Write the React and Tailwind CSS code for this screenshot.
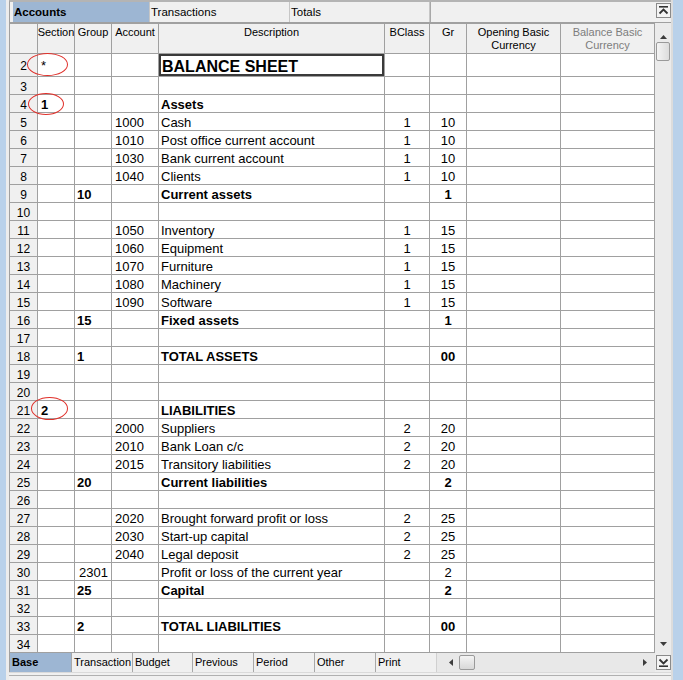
import React from "react";

const rows = [
  { n: 2, sec: "*", desc: "BALANCE SHEET", title: true },
  { n: 3 },
  { n: 4, sec: "1", desc: "Assets", bold: true },
  { n: 5, acc: "1000", desc: "Cash", bc: "1", gr: "10" },
  { n: 6, acc: "1010", desc: "Post office current account", bc: "1", gr: "10" },
  { n: 7, acc: "1030", desc: "Bank current account", bc: "1", gr: "10" },
  { n: 8, acc: "1040", desc: "Clients", bc: "1", gr: "10" },
  { n: 9, grp: "10", desc: "Current assets", gr: "1", bold: true },
  { n: 10 },
  { n: 11, acc: "1050", desc: "Inventory", bc: "1", gr: "15" },
  { n: 12, acc: "1060", desc: "Equipment", bc: "1", gr: "15" },
  { n: 13, acc: "1070", desc: "Furniture", bc: "1", gr: "15" },
  { n: 14, acc: "1080", desc: "Machinery", bc: "1", gr: "15" },
  { n: 15, acc: "1090", desc: "Software", bc: "1", gr: "15" },
  { n: 16, grp: "15", desc: "Fixed assets", gr: "1", bold: true },
  { n: 17 },
  { n: 18, grp: "1", desc: "TOTAL ASSETS", gr: "00", bold: true },
  { n: 19 },
  { n: 20 },
  { n: 21, sec: "2", desc: "LIABILITIES", bold: true },
  { n: 22, acc: "2000", desc: "Suppliers", bc: "2", gr: "20" },
  { n: 23, acc: "2010", desc: "Bank Loan c/c", bc: "2", gr: "20" },
  { n: 24, acc: "2015", desc: "Transitory liabilities", bc: "2", gr: "20" },
  { n: 25, grp: "20", desc: "Current liabilities", gr: "2", bold: true },
  { n: 26 },
  { n: 27, acc: "2020", desc: "Brought forward profit or loss", bc: "2", gr: "25" },
  { n: 28, acc: "2030", desc: "Start-up capital", bc: "2", gr: "25" },
  { n: 29, acc: "2040", desc: "Legal deposit", bc: "2", gr: "25" },
  { n: 30, grp: "2301", grpIndent: true, desc: "Profit or loss of the current year", gr: "2" },
  { n: 31, grp: "25", desc: "Capital", gr: "2", bold: true },
  { n: 32 },
  { n: 33, grp: "2", desc: "TOTAL LIABILITIES", gr: "00", bold: true },
  { n: 34 },
];

const headers = [
  { t: [""], cls: "" },
  { t: ["Section"], cls: "" },
  { t: ["Group"], cls: "" },
  { t: ["Account"], cls: "" },
  { t: ["Description"], cls: "" },
  { t: ["BClass"], cls: "" },
  { t: ["Gr"], cls: "" },
  { t: ["Opening Basic", "Currency"], cls: "" },
  { t: ["Balance Basic", "Currency"], cls: "text-[#7d7d7d]" },
];

function TopButton() {
  return (
    <div className="w-[15px] h-[15px] border border-[#8a8a8a] bg-[#f4f4f4] flex items-center justify-center">
      <svg width="11" height="11" viewBox="0 0 11 11">
        <rect x="1" y="1" width="9" height="1.6" fill="#333" />
        <polyline points="1.5,8.5 5.5,4.5 9.5,8.5" fill="none" stroke="#333" strokeWidth="1.8" />
      </svg>
    </div>
  );
}

function BottomButton() {
  return (
    <div className="w-[15px] h-[15px] border border-[#8a8a8a] bg-[#f4f4f4] flex items-center justify-center">
      <svg width="11" height="11" viewBox="0 0 11 11">
        <polyline points="1.5,2.5 5.5,6.5 9.5,2.5" fill="none" stroke="#333" strokeWidth="1.8" />
        <rect x="1" y="8.4" width="9" height="1.6" fill="#333" />
      </svg>
    </div>
  );
}

function Cell({ children, className = "" }) {
  return (
    <div className={`bg-white flex items-center pt-[2px] overflow-hidden whitespace-nowrap ${className}`}>
      {children}
    </div>
  );
}

export default function App() {
  const topTabs = [
    { t: "Accounts", w: "w-[137px]", active: true },
    { t: "Transactions", w: "w-[140px]" },
    { t: "Totals", w: "w-[140px]" },
  ];
  const bottomTabs = [
    { t: "Base", w: "w-[61px]", active: true },
    { t: "Transaction", w: "w-[61px]" },
    { t: "Budget", w: "w-[60px]" },
    { t: "Previous", w: "w-[61px]" },
    { t: "Period", w: "w-[61px]" },
    { t: "Other", w: "w-[61px]" },
    { t: "Print", w: "w-[61px]" },
  ];

  return (
    <div
      className="relative w-[683px] h-[680px] overflow-hidden bg-[#f0f0f0] flex text-black"
      style={{ fontFamily: '"Liberation Sans", Arial, sans-serif' }}
    >
      {/* left window frame */}
      <div className="w-[9px] h-full flex shrink-0">
        <div className="w-[6px] h-full bg-[#b9d1ea]" />
        <div className="w-[3px] h-full bg-[#ececec]" />
      </div>

      {/* main area */}
      <div className="w-[662px] h-full flex flex-col shrink-0">
        {/* top tab bar */}
        <div className="h-[23px] flex border-t-2 border-[#b4b4b4] border-b border-b-[#a0a0a0] border-l border-l-[#a0a0a0] bg-[#f0f0f0]">
          <div className="w-[3px]" />
          {topTabs.map((tab) => (
            <div
              key={tab.t}
              className={`${tab.w} h-full flex items-center pl-[1px] pt-[1px] text-[11.5px] leading-none border-r border-[#c6c6c6] ${
                tab.active ? "bg-[#9db6d3] font-bold" : "bg-[#f0f0f0]"
              }`}
            >
              {tab.t}
            </div>
          ))}
          <div className="flex-1 border-l border-[#a8a8a8]" />
          <div className="w-[16px] flex items-start justify-center pt-[1px]">
            <TopButton />
          </div>
        </div>

        {/* grid + vertical scrollbar */}
        <div className="h-[630px] flex">
          <div className="grid grid-cols-[27px_36px_36px_46px_225px_44px_36px_93px_93px] grid-rows-[29px_22px_repeat(32,17px)] gap-px bg-[#a0a0a0] border border-[#a0a0a0] w-[646px] h-[630px] shrink-0">
            {headers.map((h, i) => (
              <div
                key={`h${i}`}
                className={`bg-[#f0f0f0] text-[11px] leading-[13px] text-center pt-[2px] overflow-hidden whitespace-nowrap ${h.cls}`}
              >
                {h.t.map((line, j) => (
                  <div key={j} className={i === 1 ? "-mx-[4px]" : ""}>
                    {line}
                  </div>
                ))}
              </div>
            ))}
            {rows.map((r) => {
              const b = r.bold ? "font-bold" : "";
              return (
                <React.Fragment key={r.n}>
                  <div className="bg-[#f0f0f0] text-[12px] flex items-center justify-center pt-[2px]">{r.n}</div>
                  <Cell className={`pl-[3px] text-[13px] ${r.sec && r.sec !== "*" ? "font-bold" : ""}`}>{r.sec}</Cell>
                  <Cell className={`${r.grpIndent ? "pl-[4px]" : "pl-[2px]"} text-[13px] ${b}`}>{r.grp}</Cell>
                  <Cell className="pl-[3px] text-[13px]">{r.acc}</Cell>
                  {r.title ? (
                    <Cell className="border-2 border-[#3a3a3a] pl-[1px] pt-[3px] text-[16px] font-bold">{r.desc}</Cell>
                  ) : (
                    <Cell className={`pl-[2px] text-[13px] ${b}`}>{r.desc}</Cell>
                  )}
                  <Cell className="justify-center text-[13px]">{r.bc}</Cell>
                  <Cell className={`justify-center text-[13px] ${b}`}>{r.gr}</Cell>
                  <Cell />
                  <Cell />
                </React.Fragment>
              );
            })}
          </div>

          {/* vertical scrollbar */}
          <div className="w-[16px] h-full bg-[#ebebeb] flex flex-col items-center">
            <div className="h-[16px] flex items-end justify-center">
              <svg width="7" height="4" viewBox="0 0 7 4">
                <polygon points="0,4 3.5,0 7,4" fill="#3c3c3c" />
              </svg>
            </div>
            <div className="mt-[3px] w-[14px] h-[19px] rounded-[2px] border border-[#9a9a9a] bg-gradient-to-r from-[#f4f4f4] to-[#dcdcdc]" />
            <div className="flex-1" />
            <div className="h-[14px] flex items-start justify-center pt-[3px]">
              <svg width="7" height="4" viewBox="0 0 7 4">
                <polygon points="0,0 3.5,4 7,0" fill="#3c3c3c" />
              </svg>
            </div>
          </div>
        </div>

        {/* bottom tab bar + horizontal scrollbar */}
        <div className="h-[19px] flex border-l border-[#a0a0a0]">
          {bottomTabs.map((tab) => (
            <div
              key={tab.t}
              className={`${tab.w} h-full flex items-center pl-[2px] text-[11px] leading-none ${
                tab.active ? "bg-[#9db6d3] font-bold" : "bg-[#f0f0f0] border-l border-[#a8a8a8]"
              }`}
            >
              {tab.t}
            </div>
          ))}
          <div className="flex-1 h-full bg-[#e8e8e8] border-l border-[#d0d0d0] flex items-center">
            <div className="w-[22px] flex justify-end pr-[6px]">
              <svg width="4" height="7" viewBox="0 0 4 7">
                <polygon points="4,0 0,3.5 4,7" fill="#3c3c3c" />
              </svg>
            </div>
            <div className="w-[16px] h-[15px] rounded-[2px] border border-[#9a9a9a] bg-gradient-to-b from-[#f4f4f4] to-[#d8d8d8]" />
            <div className="flex-1" />
            <div className="w-[14px] flex justify-start pl-[2px]">
              <svg width="4" height="7" viewBox="0 0 4 7">
                <polygon points="0,0 4,3.5 0,7" fill="#3c3c3c" />
              </svg>
            </div>
          </div>
          <div className="w-[16px] h-full flex items-center justify-center bg-[#ececec]">
            <BottomButton />
          </div>
        </div>

        {/* bottom strip */}
        <div className="h-[8px] bg-[#f0f0f0] border-t border-[#dadada] flex flex-col">
          <div className="mt-[2px] h-px bg-[#b0b0b0]" />
        </div>
      </div>

      {/* right window frame */}
      <div className="w-[12px] h-full flex shrink-0">
        <div className="w-[2px] h-full bg-[#dcdcdc]" />
        <div className="w-[10px] h-full bg-[#b9d1ea]" />
      </div>

      {/* red annotation ellipses */}
      <div className="absolute left-[27px] top-[53px] w-[41px] h-[23px] rounded-[50%] border border-[#e0302a]" />
      <div className="absolute left-[28px] top-[93px] w-[36px] h-[22px] rounded-[50%] border border-[#e0302a]" />
      <div className="absolute left-[31px] top-[397px] w-[37px] h-[23px] rounded-[50%] border border-[#e0302a]" />
    </div>
  );
}
